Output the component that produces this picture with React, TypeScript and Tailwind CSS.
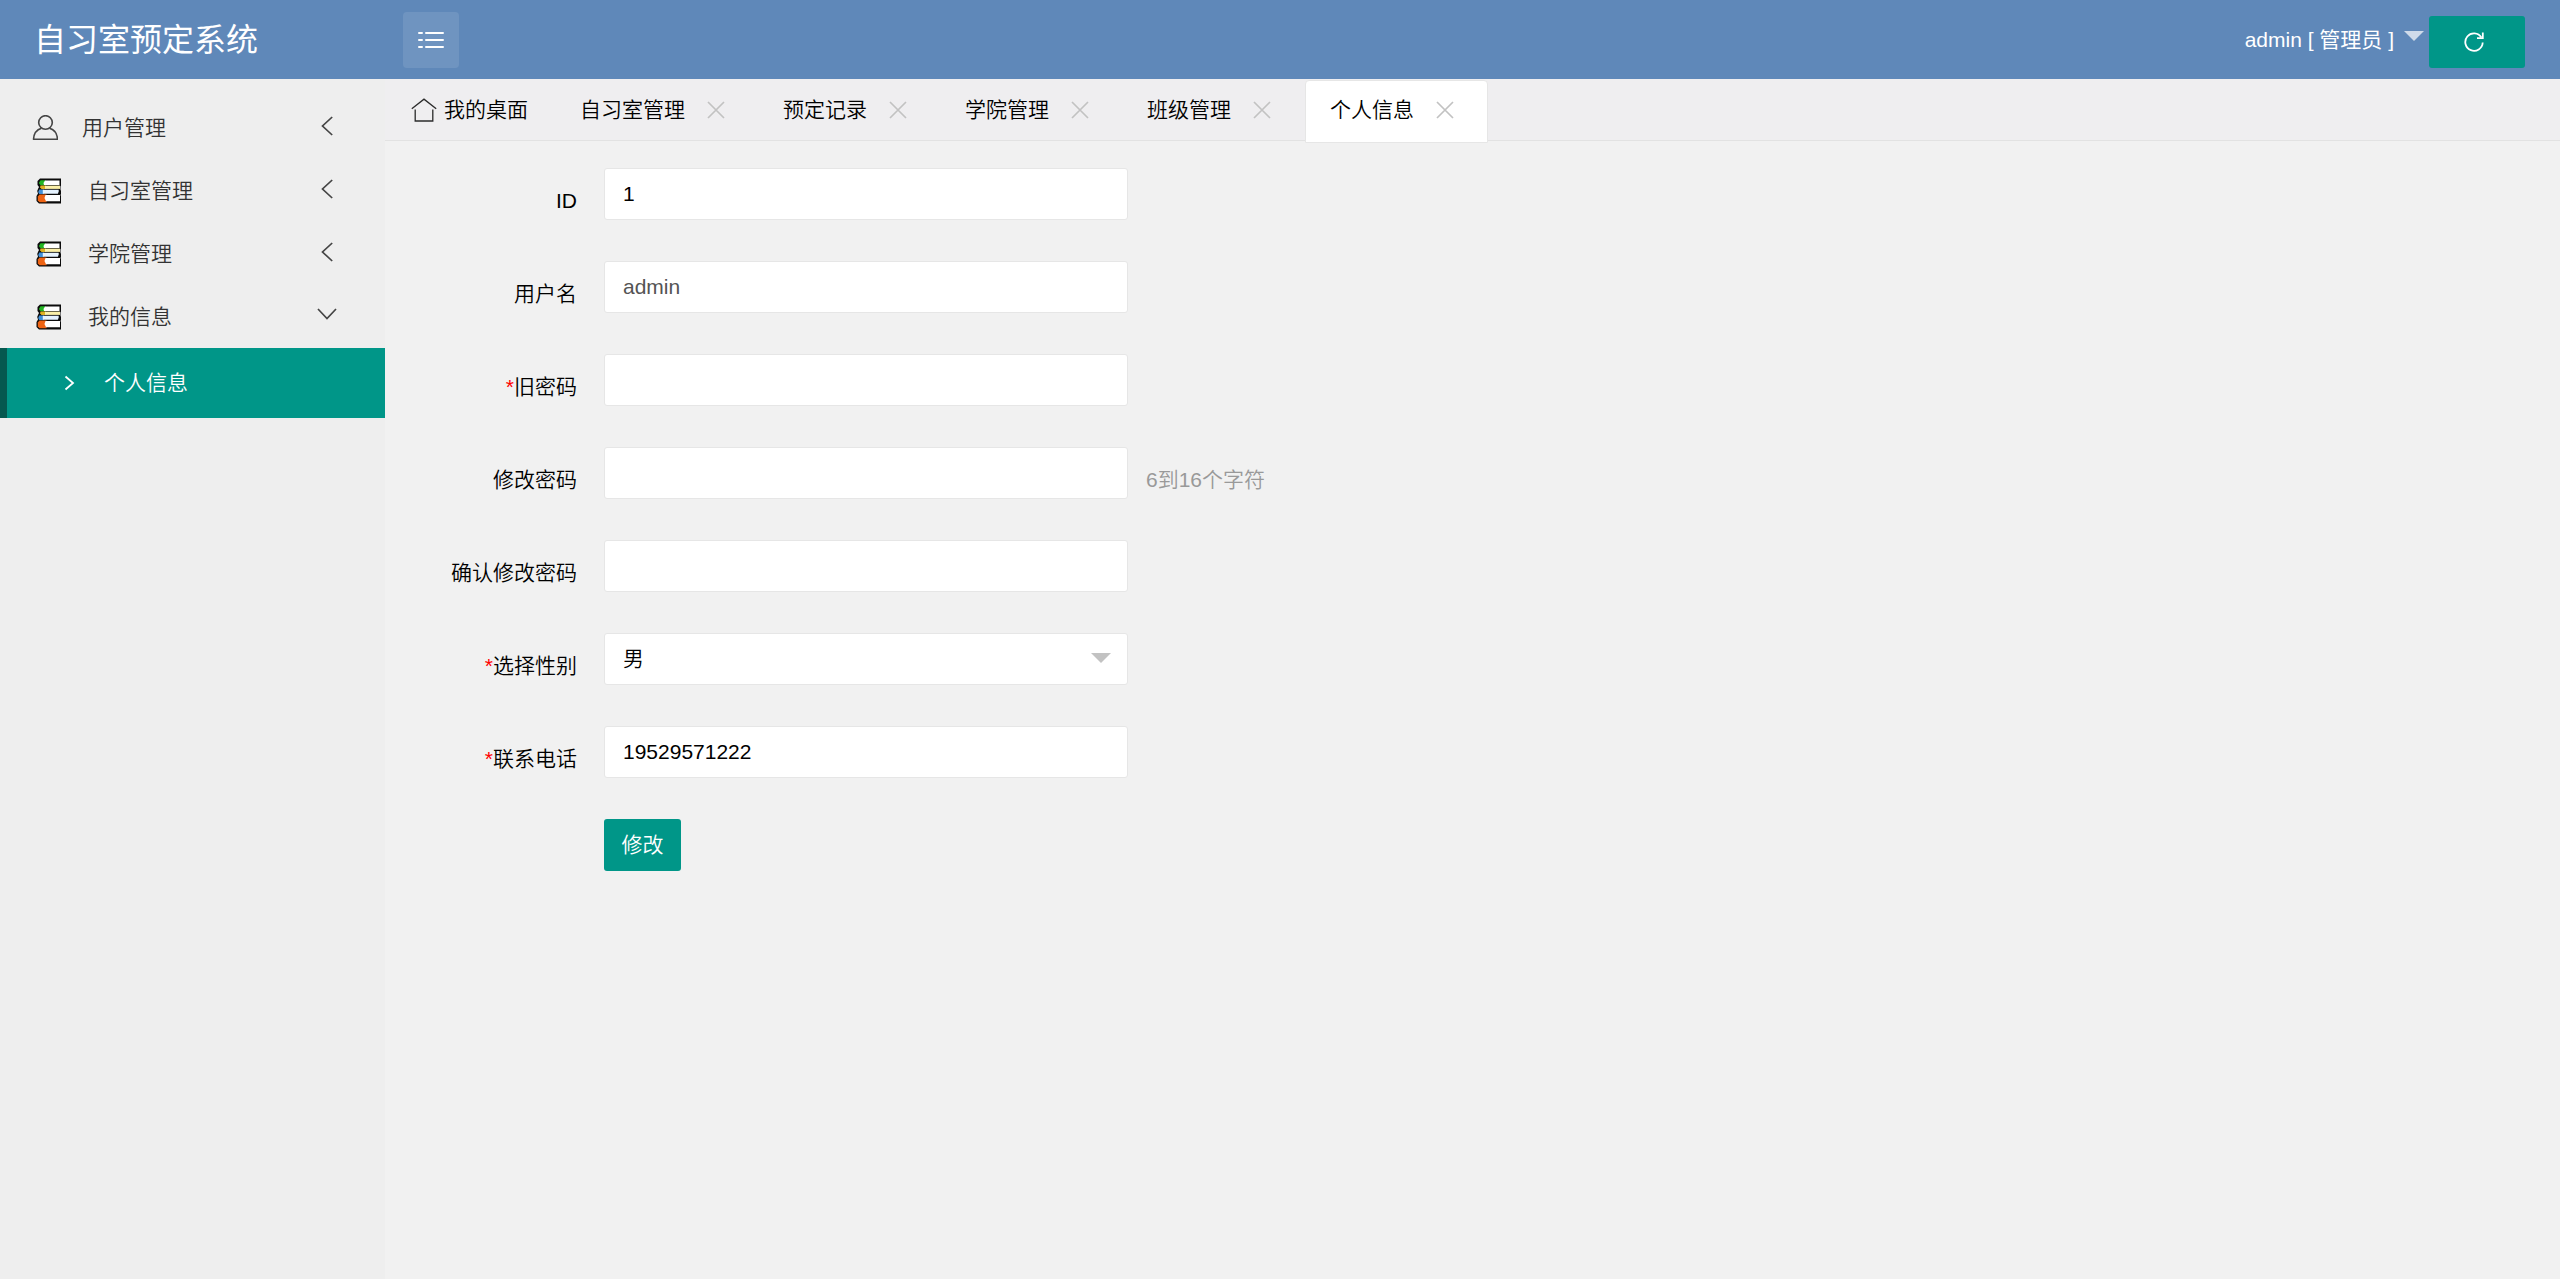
import React, { useState } from 'react';

interface MenuItem {
  name: string;
  icon: 'user' | 'books';
  children?: string[];
}

interface Field {
  id: string;
  label: string;
  type: 'text' | 'password' | 'select';
  value?: string;
  required?: boolean;
  disabled?: boolean;
  hint?: string;
}

const menu: MenuItem[] = [
  { name: '用户管理', icon: 'user' },
  { name: '自习室管理', icon: 'books' },
  { name: '学院管理', icon: 'books' },
  { name: '我的信息', icon: 'books', children: ['个人信息'] },
];

const tabs = ['自习室管理', '预定记录', '学院管理', '班级管理', '个人信息'];

const fields: Field[] = [
  { id: 'uid', label: 'ID', type: 'text', value: '1' },
  { id: 'username', label: '用户名', type: 'text', value: 'admin', disabled: true },
  { id: 'oldpass', label: '旧密码', type: 'password', required: true },
  { id: 'newpass', label: '修改密码', type: 'password', hint: '6到16个字符' },
  { id: 'repass', label: '确认修改密码', type: 'password' },
  { id: 'sex', label: '选择性别', type: 'select', value: '男', required: true },
  { id: 'phone', label: '联系电话', type: 'text', value: '19529571222', required: true },
];

function UserIcon() {
  return (
    <svg width="26" height="26" viewBox="0 0 26 26" fill="none" stroke="#444" strokeWidth="1.6">
      <circle cx="13.5" cy="7.5" r="6.8" />
      <path d="M9.500 13.200C5 14.500 1.800 18.500 1.500 24.300h24c-.3-5.800-3.500-9.800-8-11.100" strokeLinejoin="round" />
    </svg>
  );
}

function BooksIcon() {
  return (
    <svg width="26" height="26" viewBox="0 0 26 26">
      <path
        d="M4 .5h21v7l-.5 1v3l.5 1.500v3l-.5 1 .5 1v7.500H3L.5 23v-5L2 15.500 1.200 13l1-2.500L3 9 1.500 7V3z"
        fill="#0b0b0b"
      />
      <path d="M4.500 2.200h5v5h-5L2.800 5z" fill="#22b422" />
      <path d="M9 2.500h14.500v4.500H8l-.5-2z" fill="#fff" />
      <path d="M4.500 7.600h5v3.500h-4L4 9.500z" fill="#e0b020" />
      <path d="M9 7.600h15v3.300H9z" fill="#fbf0a8" />
      <path d="M3.200 11.500h4.600v4.400H3.200L2.200 14z" fill="#3f8fd8" />
      <path d="M6.800 11.700h15.900v1.800l-.8 2.200H6.800z" fill="#e6f3ff" />
      <path d="M3.500 16.500h7v7.800h-7L1.800 22.500v-4z" fill="#ee6414" />
      <path d="M9.500 16.900h14.500v6.400H10L8.500 20z" fill="#fff" />
    </svg>
  );
}

function HomeIcon() {
  return (
    <svg width="26" height="24" viewBox="0 0 26 24" fill="none" stroke="#2b2b2b" strokeWidth="1.300">
      <path d="M.800 10.800 13 1.200l12.200 9.600M4.200 11.500V23h17.600V11.500" />
    </svg>
  );
}

function Chevron({ open }: { open: boolean }) {
  return (
    <svg width="20" height="20" viewBox="0 0 20 20" fill="none" stroke="#444" strokeWidth="1.700">
      {open ? <path d="m1 4 9 9.500L19 4" /> : <path d="M15.200 1 5.500 10l9.700 9" />}
    </svg>
  );
}

function Caret({ color }: { color: string }) {
  return (
    <svg width="20" height="10" viewBox="0 0 20 10">
      <path d="M0 0h20L10 10z" fill={color} />
    </svg>
  );
}

function Header({ onToggle }: { onToggle: () => void }) {
  return (
    <header className="flex h-[79px] items-center bg-[#5f88b9] text-white">
      <a href="#" className="w-[403px] shrink-0 pl-[34px] text-[32px]">
        自习室预定系统
      </a>
      <button
        type="button"
        aria-label="菜单"
        onClick={onToggle}
        className="flex size-14 items-center justify-center rounded bg-white/10"
      >
        <svg width="26" height="18" viewBox="0 0 26 18" stroke="#fff" strokeWidth="2" strokeLinecap="round">
          <path d="M1 2h3M8 2h17M1 9h3M8 9h17M1 16h3M8 16h17" />
        </svg>
      </button>
      <div className="ml-auto flex items-center pr-[35px]">
        <button type="button" className="flex items-center gap-[10px]">
          admin [ 管理员 ]
          <span className="pb-2">
            <Caret color="#cfdbea" />
          </span>
        </button>
        <button
          type="button"
          aria-label="刷新"
          className="mt-1 ml-[5px] flex h-[52px] w-24 items-center justify-center rounded-[3px] bg-[#009688] pr-1.5"
        >
          <svg width="20" height="20" viewBox="0 0 20 20" fill="none" stroke="#fff" strokeWidth="1.800">
            <path d="M17.400 5.500A8.700 8.700 0 1 0 18.700 10.500" />
            <path d="M18.800 .5V6.200H13" />
          </svg>
        </button>
      </div>
    </header>
  );
}

function Sidebar() {
  return (
    <nav className="w-[385px] shrink-0 bg-[#eee] pt-[17px] text-[#333]">
      <ul>
        {menu.map((item) => (
          <li key={item.name}>
            <a
              href="#"
              className={`flex h-[63px] items-center pr-12 ${item.icon === 'user' ? 'gap-6 pl-8' : 'gap-[26px] pl-9'}`}
            >
              {item.icon === 'user' ? <UserIcon /> : <BooksIcon />}
              <span className="flex-1">{item.name}</span>
              <span className="pb-[3px]">
                <Chevron open={!!item.children} />
              </span>
            </a>
            {item.children?.map((child) => (
              <a
                key={child}
                href="#"
                className="flex h-[70px] items-center gap-7 border-l-[7px] border-[#05584f] bg-[#009688] pl-[57px] text-white"
              >
                <svg width="12" height="16" viewBox="0 0 12 16" fill="none" stroke="#fff" strokeWidth="1.800">
                  <path d="m1.500 1.500 7.500 6.500-7.500 6.500" />
                </svg>
                {child}
              </a>
            ))}
          </li>
        ))}
      </ul>
    </nav>
  );
}

function TabBar() {
  const [active, setActive] = useState('个人信息');

  return (
    <div className="flex h-[62px] gap-px border-b border-[#e2e2e2] bg-[#efeef0] pl-0.5 text-black">
      <button type="button" className="flex items-center gap-[7px] pr-[27px] pl-6">
        <HomeIcon />
        我的桌面
      </button>
      {tabs.map((tab) => (
        <div
          key={tab}
          className={`flex items-center gap-[21px] pr-8 ${
            active === tab ? 'z-10 mt-px h-[63px] rounded-t-sm border border-[#e6e6e6] bg-white pb-[3px] pl-6' : 'pl-6'
          }`}
        >
          <button type="button" onClick={() => setActive(tab)}>
            {tab}
          </button>
          <button type="button" aria-label={`关闭${tab}`}>
            <svg width="20" height="18" viewBox="0 0 20 18" stroke="#c2c2c2" strokeWidth="1.700">
              <path d="m2 1 16 16M18 1 2 17" />
            </svg>
          </button>
        </div>
      ))}
    </div>
  );
}

const boxClass = 'h-[52px] w-full appearance-none rounded-[3px] border border-[#e6e6e6] bg-white px-[18px] outline-none';

function FormRow({ field }: { field: Field }) {
  return (
    <div className="flex items-start">
      <label htmlFor={field.id} className="w-48 shrink-0 pt-[17px] text-right leading-8">
        {field.required && <span className="text-[#f00]">*</span>}
        {field.label}
      </label>
      <div className="relative ml-[27px] w-[524px]">
        {field.type === 'select' ? (
          <>
            <select id={field.id} defaultValue={field.value} className={boxClass}>
              <option>男</option>
              <option>女</option>
            </select>
            <span className="pointer-events-none absolute top-[20px] right-[17px]">
              <Caret color="#c2c2c2" />
            </span>
          </>
        ) : (
          <input
            id={field.id}
            type={field.type}
            defaultValue={field.value}
            disabled={field.disabled}
            className={`${boxClass} disabled:text-[#545454]`}
          />
        )}
      </div>
      {field.hint && <span className="ml-[18px] pt-[17px] leading-8 text-[#999]">{field.hint}</span>}
    </div>
  );
}

export default function App() {
  const [collapsed, setCollapsed] = useState(false);

  return (
    <div className="flex min-h-screen flex-col bg-[#f1f1f1] font-['Liberation_Sans','Noto_Sans_CJK_SC',sans-serif] text-[21px] leading-8 text-black">
      <Header onToggle={() => setCollapsed(!collapsed)} />
      <div className="flex flex-1 font-[350]">
        {!collapsed && <Sidebar />}
        <main className="min-w-0 flex-1">
          <TabBar />
          <form className="flex flex-col gap-[41px] pt-[27px]" onSubmit={(e) => e.preventDefault()}>
            {fields.map((f) => (
              <FormRow key={f.id} field={f} />
            ))}
            <button
              type="submit"
              className="ml-[219px] h-[52px] w-[77px] rounded-[3px] bg-[#009688] text-white"
            >
              修改
            </button>
          </form>
        </main>
      </div>
    </div>
  );
}
